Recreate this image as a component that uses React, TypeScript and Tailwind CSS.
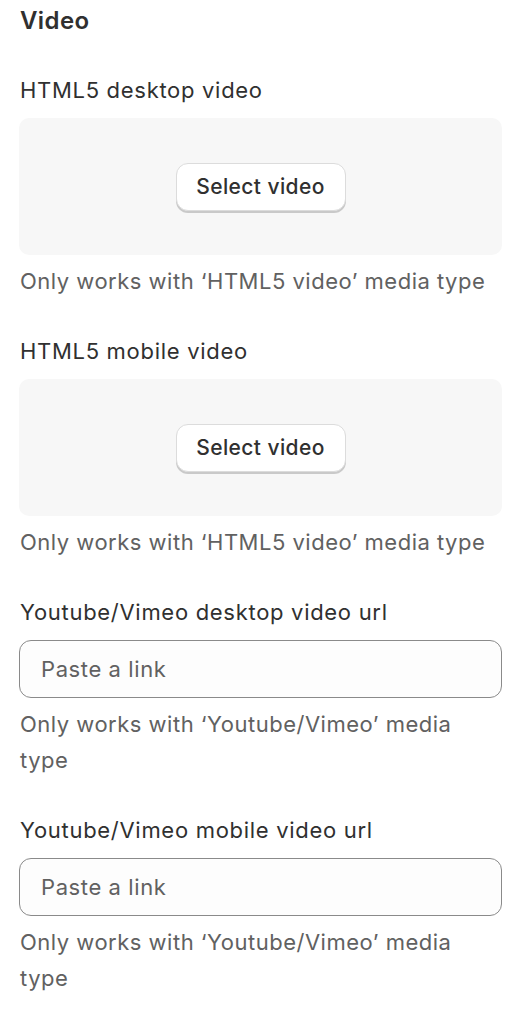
export default function App() {
  const font = { fontFamily: 'Inter, "Noto Sans", sans-serif' };
  return (
    <div className="min-h-screen bg-white pl-[19px] pr-[28px] pt-[6px] text-[#303030]" style={font}>
      <h2 className="pl-px text-[24px] font-semibold leading-[30px] tracking-[0.4px]">Video</h2>

      <div className="mt-[36px]">
        <VideoPicker label="HTML5 desktop video" help="Only works with ‘HTML5 video’ media type" />
      </div>
      <div className="mt-[34px]">
        <VideoPicker label="HTML5 mobile video" help="Only works with ‘HTML5 video’ media type" />
      </div>
      <div className="mt-[34px]">
        <UrlField label="Youtube/Vimeo desktop video url" help="Only works with ‘Youtube/Vimeo’ media type" />
      </div>
      <div className="mt-[34px]">
        <UrlField label="Youtube/Vimeo mobile video url" help="Only works with ‘Youtube/Vimeo’ media type" />
      </div>
    </div>
  );
}

function VideoPicker({ label, help }: { label: string; help: string }) {
  return (
    <div>
      <label className="block pl-px text-[22px] leading-[36px] tracking-[0.7px]">{label}</label>
      <div className="mt-[10px] flex h-[137px] items-center justify-center rounded-[10px] bg-[#f7f7f7]">
        <button className="h-[48px] w-[170px] rounded-[12px] border border-[#dcdcdc] bg-white text-[21px] font-medium tracking-[0.4px] text-[#303030] shadow-[0_2px_0_0_#c9c9c9]">
          Select video
        </button>
      </div>
      <p className="mt-[8px] pl-px text-[22px] leading-[36px] tracking-[0.5px] text-[#616161]">{help}</p>
    </div>
  );
}

function UrlField({ label, help }: { label: string; help: string }) {
  return (
    <div>
      <label className="block pl-px text-[22px] leading-[36px] tracking-[0.7px]">{label}</label>
      <div className="mt-[10px] flex h-[58px] items-center rounded-[12px] border border-[#8a8a8a] bg-[#fdfdfd] px-[21px]">
        <input
          className="w-full bg-transparent text-[22px] tracking-[0.6px] text-[#303030] outline-none placeholder:text-[#616161]"
          placeholder="Paste a link"
        />
      </div>
      <p className="mt-[8px] pl-px text-[22px] leading-[36px] tracking-[0.5px] text-[#616161]">{help}</p>
    </div>
  );
}
